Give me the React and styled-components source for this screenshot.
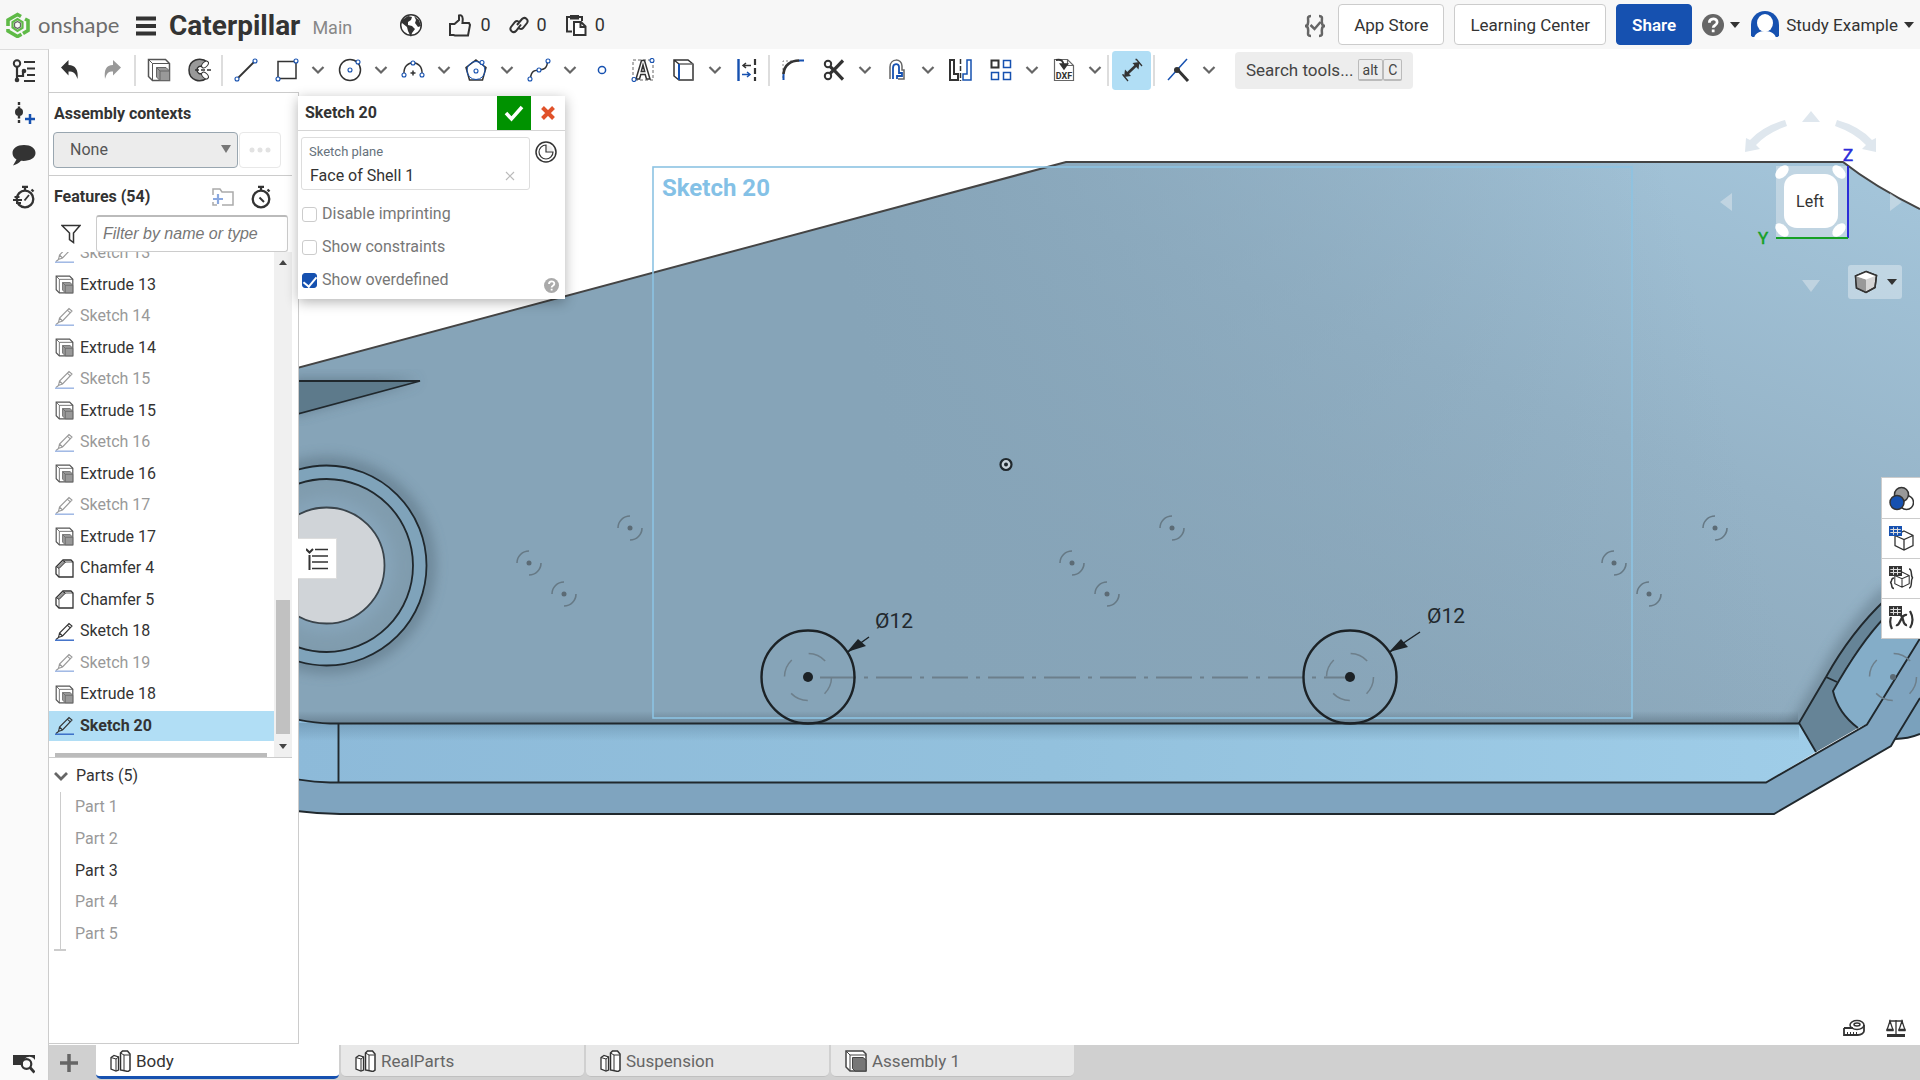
import React from 'react'
import styled, { createGlobalStyle } from 'styled-components'

const GlobalStyle = createGlobalStyle`
    * {
        box-sizing: border-box;
    }
    body {
        margin: 0;
        background-color: white;
        color: #333;
        font-family: Roboto, "Liberation Sans", sans-serif;
        font-size: 16px;
        line-height: 20px;
    }
    button, input, select {
        font: inherit;
        color: inherit;
    }
    button {
        padding: 0;
        border: none;
        background: none;
        cursor: pointer;
    }
    svg {
        display: block;
        flex: none;
    }
`

const Page = styled.div`
    height: 100vh;
    display: flex;
    flex-direction: column;
    overflow: hidden;
`

const Header = styled.header`
    height: 49px;
    flex: none;
    display: flex;
    align-items: center;
    justify-content: space-between;
    background-color: #f7f7f7;
`

const HeaderLeft = styled.div`
    display: flex;
    align-items: center;
    padding-left: 5px;
`

const Brand = styled.a`
    display: flex;
    align-items: center;
    gap: 8px;
    width: 130px;
    font-family: Lato, sans-serif;
    font-size: 22px;
    color: #6d6d6d;
    text-decoration: none;
`

const Title = styled.h1`
    margin: 2px 12px 0 12px;
    font-size: 28px;
    line-height: 32px;
    font-weight: 700;
    color: #333;
`

const Branch = styled.span`
    padding-top: 7px;
    width: 87px;
    font-size: 18px;
    color: #888;
`

const Counters = styled.div`
    display: flex;
    gap: 18px;
    margin-left: 25px;
`

const Counter = styled.button`
    display: flex;
    align-items: center;
    gap: 8px;
    font-size: 18px;
`

const HeaderRight = styled.div`
    display: flex;
    align-items: center;
    gap: 10px;
    padding-right: 6px;
`

const HeaderButton = styled.button`
    height: 41px;
    padding: 0 15px;
    border: 1px solid ${props => props.$primary ? "#1651b0" : "#ccc"};
    border-radius: 4px;
    background-color: ${props => props.$primary ? "#1651b0" : "white"};
    color: ${props => props.$primary ? "white" : "#333"};
    font-size: 17px;
    font-weight: ${props => props.$primary ? "600" : "400"};
`

const MenuButton = styled.button`
    display: flex;
    align-items: center;
    gap: 6px;
    font-size: 17px;
`

const Middle = styled.div`
    flex: 1;
    min-height: 0;
    display: flex;
`

const Rail = styled.nav`
    width: 49px;
    flex: none;
    display: flex;
    flex-direction: column;
    align-items: center;
    border-right: 1px solid #ccc;
    border-top: 1px solid #ddd;
    background-color: #fafafa;
`

const RailButton = styled.button`
    height: 42px;
    width: 48px;
    display: flex;
    align-items: center;
    justify-content: center;
    &:last-child {
        margin-top: auto;
        height: 34px;
    }
`

const Main = styled.div`
    flex: 1;
    min-width: 0;
    display: flex;
    flex-direction: column;
`

const Toolbar = styled.div`
    height: 43px;
    flex: none;
    display: flex;
    align-items: center;
    padding: 0 0 1px 2px;
`

const Tool = styled.button`
    width: 41px;
    height: 39px;
    display: flex;
    align-items: center;
    justify-content: center;
    border-radius: 4px;
    border: solid transparent;
    border-width: 0 1px;
    background-clip: padding-box;
    background-color: ${props => props.$active ? "#b1def5" : "transparent"};
`

const Drop = styled.button`
    width: 22px;
    height: 39px;
    display: flex;
    align-items: center;
    justify-content: center;
`

const Separator = styled.div`
    width: 2px;
    height: 31px;
    margin: 0 2px 0 1px;
    background-color: #ddd;
`

const Search = styled.button`
    height: 37px;
    margin-left: 15px;
    padding: 0 11px;
    display: flex;
    align-items: center;
    border-radius: 4px;
    background-color: #ededed;
    color: #444;
    font-size: 17px;
`

const Key = styled.kbd`
    height: 22px;
    padding: 0 4px;
    margin-left: ${props => props.$first ? "4px" : "0"};
    border: 1px solid #bbb;
    border-bottom-width: 2px;
    border-radius: 2px;
    font-family: inherit;
    font-size: 14px;
    line-height: 20px;
`

const Workspace = styled.div`
    flex: 1;
    min-height: 0;
    display: flex;
`

const Panel = styled.aside`
    width: 250px;
    flex: none;
    display: flex;
    flex-direction: column;
    margin-bottom: 1px;
    border: 1px solid #ccc;
    border-left: none;
`

const PanelTitle = styled.h2`
    display: block;
    margin: 0;
    flex: 1;
    font-size: 16px;
    line-height: 20px;
    font-weight: 700;
`

const Contexts = styled.section`
    padding: 11px 0 7px 4px;
    margin-right: 6px;
    border-bottom: 1px solid #ccc;
    > label {
        padding-left: 1px;
    }
`

const ContextRow = styled.div`
    display: flex;
    gap: 1px;
    padding-top: 8px;
`

const SelectWrap = styled.div`
    position: relative;
    width: 185px;
    svg {
        position: absolute;
        right: 7px;
        top: 13px;
        pointer-events: none;
    }
`

const Select = styled.select`
    display: block;
    width: 100%;
    height: 36px;
    padding: 0 16px;
    appearance: none;
    border: 1px solid #99a6b0;
    border-radius: 4px;
    background-color: #ececec;
    color: #555;
`

const MoreButton = styled.button`
    width: 42px;
    height: 36px;
    display: flex;
    align-items: center;
    justify-content: center;
    border: 1px solid #e8e8e8;
    border-radius: 4px;
`

const FeaturesHead = styled.div`
    height: 39px;
    flex: none;
    display: flex;
    align-items: center;
    gap: 14px;
    padding: 2px 26px 0 5px;
`

const FilterRow = styled.div`
    display: flex;
    align-items: center;
    gap: 15px;
    padding: 0 10px 0 12px;
`

const FilterInput = styled.input`
    width: 100%;
    min-width: 0;
    height: 37px;
    padding: 0 6px;
    border: 1px solid #ccc;
    border-top: 2px solid #bbb;
    border-radius: 3px;
    outline: none;
    font-family: "Liberation Sans", sans-serif;
    font-style: italic;
    &::placeholder {
        color: #777;
        opacity: 1;
    }
`

const FeatureArea = styled.div`
    height: 506px;
    flex: none;
    display: flex;
    margin-right: 6px;
    overflow: hidden;
    border-bottom: 1px solid #ccc;
`

const FeatureColumn = styled.div`
    flex: 1;
    display: flex;
    flex-direction: column;
    justify-content: flex-end;
`

const FeatureList = styled.ul`
    height: 503px;
    flex: none;
    margin: 0;
    padding: 0;
    list-style: none;
    display: flex;
    flex-direction: column;
    justify-content: space-between;
`

const Feature = styled.li`
    height: 30px;
    display: flex;
    align-items: center;
    gap: 6px;
    padding-left: 6px;
    background-color: ${props => props.$active ? "#b1def5" : "transparent"};
    font-weight: ${props => props.$active ? "700" : "400"};
    color: ${props => props.$muted ? "#999" : "#333"};
    svg {
        opacity: ${props => props.$muted ? "0.5" : "1"};
    }
`

const HorizontalThumb = styled.div`
    height: 4px;
    flex: none;
    margin: 12px 7px 0 6px;
    background-color: #bbb;
`

const Scroll = styled.div`
    width: 18px;
    display: flex;
    flex-direction: column;
    align-items: center;
    justify-content: space-between;
    padding: 8px 0;
    background-color: #f0f0f0;
`

const Thumb = styled.div`
    width: 14px;
    height: 134px;
    margin: auto 0 10px;
    background-color: #c1c1c1;
`

const PartsHead = styled.button`
    height: 34px;
    display: flex;
    align-items: center;
    gap: 8px;
    padding: 1px 0 0 5px;
`

const PartList = styled.ul`
    height: 157px;
    margin: 0 0 0 11px;
    padding: 0 0 0 14px;
    list-style: none;
    display: flex;
    flex-direction: column;
    justify-content: space-between;
    border-left: 1px solid #ccc;
`

const PartEnd = styled.div`
    width: 12px;
    height: 2px;
    margin-left: 5px;
    background-color: #ccc;
`

const Part = styled.li`
    line-height: 30px;
    color: ${props => props.$muted ? "#999" : "#333"};
`

const Stage = styled.main`
    position: relative;
    flex: 1;
    min-width: 0;
`

const Drawing = styled.svg`
    position: absolute;
    inset: 0;
    width: 100%;
    height: 100%;
`

const Dialog = styled.section`
    position: absolute;
    left: -1px;
    top: 4px;
    width: 267px;
    background-color: white;
    box-shadow: 0 3px 12px rgba(0, 0, 0, 0.3);
`

const DialogHead = styled.div`
    height: 35px;
    display: flex;
    align-items: center;
    padding-left: 7px;
    border-bottom: 1px solid #d5d5d5;
`

const Accept = styled.button`
    width: 34px;
    height: 34px;
    display: flex;
    align-items: center;
    justify-content: center;
    background-color: #009200;
`

const Cancel = styled(Accept)`
    background-color: white;
`

const DialogBody = styled.div`
    padding: 6px 3px 0;
    height: 168px;
`

const PlaneRow = styled.div`
    display: flex;
    gap: 5px;
    align-items: flex-start;
    > svg {
        margin-top: 4px;
    }
`

const PlaneField = styled.div`
    width: 229px;
    height: 53px;
    padding: 4px 13px 0 7px;
    border: 1px solid #ddd;
    border-radius: 3px;
`

const PlaneLabel = styled.div`
    font-size: 13px;
    color: #66727c;
`

const PlaneValue = styled.div`
    display: flex;
    align-items: center;
    justify-content: space-between;
    padding: 4px 0 0 1px;
`

const Options = styled.div`
    display: flex;
    flex-direction: column;
    gap: 13px;
    padding-top: 14px;
`

const Option = styled.label`
    display: flex;
    align-items: center;
    gap: 5px;
    padding-left: 1px;
    color: #777;
`

const Check = styled.input`
    appearance: none;
    width: 15px;
    height: 15px;
    margin: 0;
    border: 1px solid #ccc;
    border-radius: 3px;
    background-color: white;
    &:checked {
        border-color: #1651b0;
        background-color: #1651b0;
    }
    &:checked::after {
        content: "";
        display: block;
        width: 6px;
        height: 11px;
        margin: 0 auto;
        border: solid white;
        border-width: 0 2px 2px 0;
        transform: rotate(40deg);
    }
`

const DialogHelp = styled.button`
    position: absolute;
    right: 6px;
    bottom: 6px;
`

const ListToggle = styled.button`
    position: absolute;
    left: -1px;
    top: 446px;
    width: 39px;
    height: 41px;
    display: flex;
    align-items: center;
    justify-content: center;
    border: 1px solid #ddd;
    border-left: none;
    background-color: white;
`

const ViewButton = styled.button`
    position: absolute;
    right: 18px;
    top: 173px;
    width: 54px;
    height: 34px;
    display: flex;
    align-items: center;
    justify-content: center;
    gap: 9px;
    border-radius: 3px;
    background-color: rgba(255, 255, 255, 0.35);
`

const SideTabs = styled.div`
    position: absolute;
    right: 0;
    top: 385px;
    width: 39px;
    border: 1px solid #ccc;
    border-right: none;
    background-color: white;
`

const SideTab = styled.button`
    width: 100%;
    height: 40px;
    display: flex;
    align-items: center;
    justify-content: center;
    & + & {
        border-top: 1px solid #ccc;
    }
`

const Measures = styled.div`
    position: absolute;
    right: 13px;
    bottom: 8px;
    display: flex;
    gap: 20px;
`

const Tabs = styled.footer`
    height: 35px;
    flex: none;
    display: flex;
    gap: 2px;
    background-color: #d0d0d0;
`

const AddTab = styled.button`
    width: 45px;
    display: flex;
    align-items: center;
    justify-content: center;
    padding-right: 5px;
`

const Tab = styled.button`
    width: 243px;
    height: ${props => props.$active ? "34px" : "32px"};
    display: flex;
    align-items: center;
    gap: 5px;
    padding-left: 14px;
    border-radius: 0 0 5px 5px;
    border-bottom: ${props => props.$active ? "3px solid #1651b0" : "1px solid #c0c0c0"};
    background-color: ${props => props.$active ? "white" : "#e8e8e8"};
    color: ${props => props.$active ? "#333" : "#666"};
    font-size: 17px;
`

const D = "#333"
const B = "#1651b0"

const Icon = ({ w = 24, h = w, box, children }) => (
    <svg width={w} height={h} viewBox={box || `0 0 ${w} ${h}`} fill="none" stroke={D} strokeWidth="1.5" aria-hidden="true">
        {children}
    </svg>
)

const Node = ({ x, y }) => <circle cx={x} cy={y} r="2" fill="white" stroke={B} strokeWidth="1.1"/>

const Chevron = () => (
    <Icon w={14}><path d="M1.5 4 7 9.5l5.5-5.5" stroke="#666" strokeWidth="2.2"/></Icon>
)

const Caret = () => (
    <Icon w={10} h={6}><path d="M0 0h10L5 6z" fill={D} stroke="none"/></Icon>
)

const ExtrudeIcon = ({ size = 24 }) => (
    <Icon w={size} box="0 0 24 24">
        <path d="M1.5 1.5h17l4 4v17h-17l-4-4z" fill="white" stroke="#555"/>
        <path d="M1.5 1.5l4 4h17M5.500 5.500v17" strokeWidth="1" stroke="#555"/>
        <path d="M9.500 9.500h9.500l3.500 3.500v9.500H13l-3.500-3.500z" fill="#999" strokeWidth="1" stroke="#666"/>
        <path d="M9.500 9.500l3.500 3.500h9.500M13 13v9.500" strokeWidth="1" stroke="#666"/>
    </Icon>
)

const SketchIcon = () => (
    <Icon w={19}>
        <path d="M3.500 15.500l1-4.500L14 1.500l3 2.500-9.500 10zM4.500 11l3 3M12.300 3.200l3 2.700M3.500 15.500L1 17.500" strokeWidth="1.1"/>
        <path d="M0 18.200h19" stroke="#3266c4" strokeWidth="1.4"/>
    </Icon>
)

const ChamferIcon = () => (
    <Icon w={19}>
        <path d="M1 8l7-7h8l2 2v15H4l-3-3z" fill="white" strokeWidth="1.3"/>
        <path d="M1.500 7.500l6-6 3 1.500-6.500 6.500z" fill="#999" strokeWidth="1"/>
        <path d="M4 9.500V18M10.500 3H18" strokeWidth="0.8"/>
    </Icon>
)

const featureIcons = { Extrude: <ExtrudeIcon size={19}/>, Sketch: <SketchIcon/>, Chamfer: <ChamferIcon/> }

const StopwatchIcon = ({ fast }) => (
    <Icon>
        <circle cx="13" cy="14" r="8.300" strokeWidth="2.300"/>
        <path d="M10 1.800h6M13 2v4M19.500 4.500l2 2" strokeWidth="2.300"/>
        {fast
            ? <path d="M12.500 15.500l4.500-5.500M1 15h9M2.500 12h5M4 18h5" strokeWidth="1.800"/>
            : <path d="M11.500 12.500l4.500 4.500" strokeWidth="2"/>}
    </Icon>
)

const HelpIcon = ({ size, color }) => (
    <Icon w={size} box="0 0 24 24">
        <circle cx="12" cy="12" r="12" fill={color} stroke="none"/>
        <path d="M8 9.500c0-5.500 8.500-5.500 8.500-.5 0 3.500-4.300 3-4.300 6M12.200 17v3" stroke="white" strokeWidth="3"/>
    </Icon>
)

const LogoIcon = () => (
    <Icon w={25} h={26}>
        <path d="M3 14V8l9.500-5.500L16 4.500M20 7l3 1.500v10L18 21.500M3 17v2l9.500 5.500 4-2.300" stroke="#5fba47" strokeWidth="3.600"/>
        <path d="M7.500 15.500V10l5-3 5 3v6l-5 3z" stroke="#5fba47" strokeWidth="2.200"/>
        <path d="M12.500 9.500l3 1.700v3.600l-3 1.700-3-1.700v-3.600z" stroke="#666" strokeWidth="1.200"/>
    </Icon>
)

const PartStudioIcon = () => (
    <Icon w={21} h={22}>
        <path d="M1 7.500l3-2 4.500 1.500v13L6 21l-5-2z" fill="white" strokeWidth="1.300"/>
        <path d="M1 7.500l5 1.500 2.500-2M6 9v12" strokeWidth="1"/>
        <path d="M10.500 3l2-2h5l2.500 3v16l-2 1.500-7.500-1.500z" fill="white" strokeWidth="1.500"/>
        <path d="M10.500 3l3.500 2h5.500M14 5v16" strokeWidth="1"/>
    </Icon>
)

const AssemblyIcon = () => (
    <Icon w={22}>
        <path d="M1 1h17l3 3v17H5l-4-4z" fill="white" stroke="#444"/>
        <path d="M1 1l4 4h16M5 5v16" strokeWidth="1" stroke="#444"/>
        <path d="M7.500 7.500H18l3 2.500v11H10l-2.500-2.500z" fill="#777" strokeWidth="1" stroke="#444"/>
    </Icon>
)

const GridGlyph = ({ color }) => (
    <g>
        <path d="M0 0h13v10H0z" fill={color} stroke="none"/>
        <path d="M1.300 3.500h10.500M1.300 6.500h10.500M4.500 1.300v7.500M8.500 1.300v7.500" stroke="#ddd" strokeWidth="1"/>
    </g>
)

const CubeGlyph = () => (
    <path d="M15 5l9 4.500v10L15 24l-9-4.500v-10zM6 9.500l9 4 9-4M15 13.500V24" fill="white" strokeWidth="1.300"/>
)

const tools = [
    { name: "Undo", icon: <Icon><path d="M1 9.500L8.500 2v5c7 0 10 5 9 14-2-6-4-7.500-9-7.500v4z" fill={D} stroke="none"/></Icon> },
    { name: "Redo", icon: <Icon><path d="M20 9.500L12 2v5C5 7 3 12 4 21c2-6 3-7.500 8-7.500v4z" fill="#999" stroke="none"/></Icon>, end: true },
    { name: "Extrude", icon: <ExtrudeIcon/> },
    { name: "Revolve", icon: (
        <Icon>
            <path d="M20 4.500C12-2 1 2 1 12s11 14 19 7.500l-5-4.500c-3 2-6 0-6-3s3-5 6-3z" fill="#999"/>
            <ellipse cx="17" cy="6.500" rx="4" ry="2.500" transform="rotate(-45 17 6.500)" fill="white" strokeWidth="1"/>
            <ellipse cx="17" cy="17.500" rx="4" ry="2.500" transform="rotate(45 17 17.500)" fill="white" strokeWidth="1"/>
            <path d="M7 12h17" strokeDasharray="4 2"/>
        </Icon>
    ), end: true },
    { name: "Line", icon: <Icon><path d="M3.500 20.500l17-17" strokeWidth="1.800"/><Node x="3" y="21"/><Node x="21" y="3"/></Icon> },
    { name: "Rectangle", drop: true, icon: <Icon><path d="M3 3.500h18v17H3z"/><Node x="3" y="21"/><Node x="21" y="3"/></Icon> },
    { name: "Circle", drop: true, icon: <Icon><circle cx="12" cy="12" r="10.500"/><Node x="12" y="12"/><Node x="20" y="4"/></Icon> },
    { name: "Arc", drop: true, icon: <Icon><path d="M3 16C2 1 22 1 21 16M9.500 15h5M12 12.500v5"/><Node x="3" y="17"/><Node x="12" y="5"/><Node x="21" y="17"/></Icon> },
    { name: "Polygon", drop: true, icon: <Icon><path d="M12 2l10 7.500L18.500 22h-13L2 9.500z"/><circle cx="12" cy="12.500" r="9" stroke={B} strokeWidth="1"/><Node x="12" y="13"/><Node x="18" y="4.500"/></Icon> },
    { name: "Spline", drop: true, icon: <Icon><path d="M3.500 20c1-9 6-7.500 8.500-8s8 .500 8.500-8.500"/><Node x="3" y="21"/><Node x="12" y="12"/><Node x="21" y="3"/></Icon> },
    { name: "Point", icon: <Icon><circle cx="12" cy="12" r="3.600" stroke={B}/></Icon> },
    { name: "Text", icon: <Icon><path d="M2 2h20v20H2z" strokeDasharray="3 2" strokeWidth="1" stroke="#666"/><path d="M5 21L10.500 2.500h3L19 21h-3.500l-1.300-4.500H9.800L8.500 21zM12 7l-1.700 6.500h3.400z" fill="white"/><Node x="3" y="21.500"/><Node x="21" y="2.500"/></Icon> },
    { name: "Use", drop: true, icon: <Icon><path d="M2 2h14l5 4v16H7l-5-4zM2 2l5 4"/><path d="M7 6h14M21 6v16" stroke="#666"/><path d="M7 6v16" stroke={B} strokeWidth="2"/></Icon> },
    { name: "Align", end: true, icon: <Icon><path d="M3.500 1v22" stroke={B} strokeWidth="2.400"/><path d="M20 1v22" strokeWidth="2.200" strokeDasharray="6 3"/><path d="M16 7.500H9M11 5L8 7.500l3 2.500"/><path d="M7 16.500h7M12 14l3 2.500-3 2.500" stroke={B}/></Icon> },
    { name: "Fillet", icon: <Icon><path d="M2 20V3h17" strokeDasharray="2 2" strokeWidth="1" stroke="#888"/><path d="M2.500 22v-6M18 2.500h5" stroke={B} strokeWidth="2"/><path d="M2.500 16C3 7 10 2.500 18 2.500" strokeWidth="2.600"/></Icon> },
    { name: "Trim", drop: true, icon: <Icon><circle cx="6" cy="6" r="3.200" strokeWidth="2"/><circle cx="6" cy="18" r="3.200" strokeWidth="2"/><path d="M8 8.500c6 5 8 8 13 13M8 15.500c6-5 8-8 13-13" strokeWidth="3.200"/></Icon> },
    { name: "Offset", drop: true, icon: <Icon><path d="M5 21V9c0-9 12-9 12-1v4h2v9h-6" stroke="#666"/><path d="M8 21V10c0-5 6-5 6-1v6h3v3h-5v3" stroke={B} strokeWidth="1.800"/></Icon> },
    { name: "Mirror", icon: <Icon><path d="M2 2h4v14h4v6H2z" strokeWidth="2"/><path d="M12.500 1v22" strokeDasharray="5 2"/><path d="M23 2h-4v14h-4v6h8z" stroke={B}/></Icon> },
    { name: "Pattern", drop: true, icon: <Icon><path d="M2.500 2.500h7v7h-7z" strokeWidth="2"/><path d="M14.500 2.500h7v7h-7zM2.500 14.500h7v7h-7zM14.500 14.500h7v7h-7z" stroke={B}/></Icon> },
    { name: "Insert DXF", drop: true, end: true, icon: (
        <Icon>
            <path d="M2.500 1.500h13l6 6v15h-19zM15.500 1.500v6h6" strokeWidth="1.200" stroke="#666"/>
            <path d="M4 2c6-1 7 1 8 6" strokeWidth="1.800"/>
            <path d="M8.500 6l3.500 5 3.500-5z" fill={D}/>
            <text x="12" y="21" textAnchor="middle" fontSize="9" fontWeight="700" fill={D} stroke="none">DXF</text>
        </Icon>
    ) },
    { name: "Dimension", active: true, end: true, icon: <Icon><path d="M7 16L16.500 7" strokeWidth="2.600"/><path d="M4 19l1-7.500 6 6.500zM19.500 4l-7 1 6 6.500z" fill={D} stroke="none"/><path d="M3 16v1l5 6M15.500 1.500h1L22 8" strokeWidth="1.300"/></Icon> },
    { name: "Constraint", drop: true, icon: <Icon><path d="M2 22L21 1" stroke={B}/><path d="M11 11l11 12" strokeWidth="3"/><circle cx="11" cy="12" r="3" fill={D} stroke="none"/></Icon> }
]

const railIcons = [
    { name: "Feature list", icon: <Icon><circle cx="5" cy="4.500" r="3.200" strokeWidth="2"/><path d="M5 8v13M5 17h6v-5M12 3h11M15 9.500h8M15 16h8M12 22h11" strokeWidth="2.200"/><circle cx="5" cy="21" r="2.300" fill={D} stroke="none"/><circle cx="12" cy="12" r="2.300" fill={D} stroke="none"/></Icon> },
    { name: "Versions", icon: <Icon><path d="M7 1v22" strokeWidth="2.400" strokeDasharray="3 1.500"/><circle cx="7" cy="11" r="4" fill={D} stroke="none"/><path d="M18 13v10M13 18h10" stroke={B} strokeWidth="2.500"/></Icon> },
    { name: "Comments", icon: <Icon><path d="M12 2C5 2 .500 5.500.500 10c0 3 1.500 5 4 6.500L1 22.500c4-1 6-2.500 8-4.700 8 .700 14.500-2.300 14.500-7.800C23.500 5.500 19 2 12 2z" fill={D} stroke="none"/></Icon> },
    { name: "History", icon: <StopwatchIcon fast/> },
    { name: "Search document", icon: <Icon w={22}><path d="M0 3h22v5c-4-6-13-3-12 5H0z" fill={D} stroke="none"/><circle cx="13.500" cy="12" r="4.800" strokeWidth="2.200"/><path d="M17 15.500l4.500 5" strokeWidth="2.800"/></Icon> }
]

const features = [
    ["Sketch", 13, "muted"], ["Extrude", 13], ["Sketch", 14, "muted"], ["Extrude", 14],
    ["Sketch", 15, "muted"], ["Extrude", 15], ["Sketch", 16, "muted"], ["Extrude", 16],
    ["Sketch", 17, "muted"], ["Extrude", 17], ["Chamfer", 4], ["Chamfer", 5],
    ["Sketch", 18], ["Sketch", 19, "muted"], ["Extrude", 18], ["Sketch", 20, "active"]
]

const marks = [[630, 528], [529, 563], [564, 594], [1172, 528], [1072, 563], [1107, 594], [1715, 528], [1614, 563], [1649, 594]]

const HiddenHole = ({ x, y }) => (
    <circle cx={x} cy={y} r="23.500" stroke="#6d7f8b" strokeWidth="1.500" strokeDasharray="18.450 18.450"/>
)

const Model = () => (
    <Drawing viewBox="299 92 1621 953" preserveAspectRatio="xMinYMin slice" fill="none" role="img" aria-label="Caterpillar body, left view">
        <defs>
            <linearGradient id="body" gradientUnits="userSpaceOnUse" x1="1800" y1="160" x2="1560" y2="760">
                <stop offset="0" stopColor="#a3c4d9"/>
                <stop offset="0.500" stopColor="#95b3c7"/>
                <stop offset="1" stopColor="#8ba7ba"/>
            </linearGradient>
            <linearGradient id="bodyLeft" gradientUnits="userSpaceOnUse" x1="900" y1="500" x2="1700" y2="300">
                <stop offset="0" stopColor="#86a4b8"/>
                <stop offset="1" stopColor="#86a4b8" stopOpacity="0"/>
            </linearGradient>
            <linearGradient id="groove" x1="0" x2="1" y1="0" y2="0">
                <stop offset="0" stopColor="#8dbad9"/>
                <stop offset="0.500" stopColor="#93c1dd"/>
                <stop offset="1" stopColor="#9fcde8"/>
            </linearGradient>
            <linearGradient id="grooveShade" x1="0" x2="0" y1="0" y2="1">
                <stop offset="0" stopColor="#4d7088" stopOpacity="0.350"/>
                <stop offset="1" stopColor="#4d7088" stopOpacity="0"/>
            </linearGradient>
            <linearGradient id="edgeShade" x1="0" x2="0" y1="1" y2="0">
                <stop offset="0" stopColor="#4c606e" stopOpacity="0.450"/>
                <stop offset="1" stopColor="#4c606e" stopOpacity="0"/>
            </linearGradient>
            <filter id="soft" x="-30%" y="-30%" width="160%" height="160%">
                <feGaussianBlur stdDeviation="7"/>
            </filter>
            <clipPath id="plate">
                <path d="M290 370L1066 162h777Q1875 187 1920 209V723H330Q312 723 290 719z"/>
            </clipPath>
        </defs>

        <path d="M290 370L1066 162h777Q1875 187 1920 209V723H330Q312 723 290 719z" fill="url(#body)"/>
        <path d="M290 370L1066 162h777Q1875 187 1920 209V723H330Q312 723 290 719z" fill="url(#bodyLeft)"/>
        <g clipPath="url(#plate)">
            <path d="M290 380h130L290 415z" fill="#3d515f" opacity="0.500" filter="url(#soft)"/>
            <circle cx="327" cy="565" r="101" stroke="#4c606e" strokeWidth="12" opacity="0.550" filter="url(#soft)"/>
            <path d="M1793 733L1826 677Q1850 630 1890 590" stroke="#4c606e" strokeWidth="10" opacity="0.600" filter="url(#soft)"/>
            <path d="M290 711h1508v12H290z" fill="url(#edgeShade)"/>
        </g>
        <path d="M290 370L1066 162h777Q1875 187 1920 209" stroke="#444" strokeWidth="2"/>

        <path d="M290 381h130L290 416z" fill="#5d7a8b" stroke="#20282d" strokeWidth="1.800"/>

        <circle cx="326.500" cy="565.500" r="100" fill="#7fa3ba" stroke="#20282d" strokeWidth="1.800"/>
        <circle cx="326.500" cy="565.500" r="86.500" fill="#809cae" stroke="#20282d" strokeWidth="1.800"/>
        <circle cx="326.500" cy="565.500" r="68" fill="#86a4b9" filter="url(#soft)"/>
        <circle cx="326.500" cy="565.500" r="58" fill="#d0d4d8" stroke="#3a444b" strokeWidth="1.800"/>

        <path d="M290 718Q312 723 330 723H1799l17 29-50 30H330Q312 782 290 778z" fill="url(#groove)"/>
        <path d="M299 723h1500v18H299z" fill="url(#grooveShade)"/>
        <path d="M1867 724l53-88v80q0 18-25 23l-30 0z" fill="#82a9c3"/>
        <path d="M1881 603v20Q1853 650 1833 691q5 22 25 37l-42 24-17-29 27-46q25-45 55-74z" fill="#668497"/>
        <path d="M1925 580Q1862 630 1833 691q5 22 25 37l9-4 58-94z" fill="#84adc8"/>
        <path d="M290 778q20 4 40 4h1436l101-58 53-86v60l-25 41-4 7-117 68H340q-25 0-50-4z" fill="#7fa4bf"/>
        <path d="M1895 739q13 0 25-5v-37z" fill="#7aa1bc"/>

        <g stroke="#20282d" strokeWidth="1.900">
            <path d="M290 718Q312 723 330 723.500H1799M338.500 723v59"/>
            <path d="M290 778q20 4 40 4.500h1436l101-58 53-86"/>
            <path d="M290 810q25 4 50 4h1434l117-68 4-7 25-41"/>
            <path d="M1816 752l-17-29 27-46q25-45 60-78M1826 677l11 5"/>
            <path d="M1885 617Q1860 643 1833 691q5 22 25 37M1895 739q13 0 25-5"/>
        </g>

        <rect x="653" y="167" width="979" height="551" stroke="#8cc3e3" strokeWidth="1.600"/>
        <text x="662" y="196" fontSize="24" fontWeight="700" fill="#84c1e6">Sketch 20</text>

        {marks.map(([x, y]) => (
            <g key={x} stroke="#667985" strokeWidth="1.600">
                <path d={`M${x - 12} ${y}A12 12 0 0 1 ${x} ${y - 12}M${x + 12} ${y}A12 12 0 0 1 ${x} ${y + 12}`}/>
                <circle cx={x} cy={y} r="2.500" fill="#5c6b75" stroke="none"/>
            </g>
        ))}

        <path d="M820 677.500h530" stroke="#6c7f8b" strokeWidth="1.800" strokeDasharray="36 8 4 8"/>
        {[808, 1350].map(x => (
            <g key={x}>
                <circle cx={x} cy="677" r="46.500" stroke="#1c2226" strokeWidth="2.400"/>
                <HiddenHole x={x} y={677}/>
                <circle cx={x} cy="677" r="5" fill="#1c2226"/>
            </g>
        ))}
        <HiddenHole x={1893} y={677}/>
        <circle cx="1893" cy="677" r="3" fill="#5c6b75"/>

        <path d="M848 652l21-15M1390 652l30-20" stroke="#1c2226" strokeWidth="1.500"/>
        <path d="M847 652l11-13 8 7zM1389 652l12-13 7 8z" fill="#1c2226"/>
        <g fontSize="21" fill="#22292e">
            <text x="875" y="628">Ø12</text>
            <text x="1427" y="623">Ø12</text>
        </g>

        <circle cx="1006" cy="464.500" r="5.500" fill="#c9d3da" stroke="#20282d" strokeWidth="2.200"/>
        <circle cx="1006" cy="464.500" r="2" fill="#20282d"/>
    </Drawing>
)

const ViewCube = () => (
    <Drawing viewBox="299 92 1621 953" preserveAspectRatio="xMaxYMin slice" fill="none" aria-label="View cube">
        <g fill="#dfe7ee">
            <path d="M1811 111l9 11h-18z"/>
            <path d="M1785 120l2 6q-20 7-31 19l4 4-15 3 1-14 4 2q13-14 35-20z"/>
            <path d="M1837 120l-2 6q20 7 31 19l-4 4 14 3 0-14-4 2q-13-14-35-20z"/>
        </g>
        <g fill="#dfe7ee" fillOpacity="0.500">
            <path d="M1720 202l12-9v18zM1902 202l-12-9v18zM1811 292l-9-12h18z"/>
            <path d="M1776 166h71v72h-71z"/>
        </g>
        <g fill="white">
            <rect x="1784" y="174" width="54" height="54" rx="13"/>
            <ellipse cx="1782" cy="172" rx="8" ry="5" transform="rotate(-45 1782 172)"/>
            <ellipse cx="1839" cy="172" rx="8" ry="5" transform="rotate(45 1839 172)"/>
            <ellipse cx="1782" cy="230" rx="8" ry="5" transform="rotate(45 1782 230)"/>
            <ellipse cx="1839" cy="230" rx="8" ry="5" transform="rotate(-45 1839 230)"/>
        </g>
        <path d="M1848 166v72" stroke="#2c2cd8" strokeWidth="2"/>
        <path d="M1776 238h72" stroke="#16a024" strokeWidth="2"/>
        <g textAnchor="middle">
            <text x="1810" y="207" fontSize="16" fill="#333">Left</text>
            <text x="1848" y="161" fontSize="17" fill="#2c2cd8" stroke="#2c2cd8" strokeWidth="0.500">Z</text>
            <text x="1763" y="244" fontSize="17" fill="#16a024" stroke="#16a024" strokeWidth="0.500">Y</text>
        </g>
    </Drawing>
)

const FeaturePanel = () => (
    <Panel>
        <Contexts>
            <PanelTitle as="label" htmlFor="context">Assembly contexts</PanelTitle>
            <ContextRow>
                <SelectWrap>
                    <Select id="context"><option>None</option></Select>
                    <Icon w={10} h={8}><path d="M0 0h10L5 8z" fill="#777" stroke="none"/></Icon>
                </SelectWrap>
                <MoreButton aria-label="Context options">
                    <Icon w={22} h={6}><path d="M3 3h.010M11 3h.010M19 3h.010" stroke="#e2e2e2" strokeWidth="5" strokeLinecap="round"/></Icon>
                </MoreButton>
            </ContextRow>
        </Contexts>
        <FeaturesHead>
            <PanelTitle>Features (54)</PanelTitle>
            <button aria-label="Add folder">
                <Icon w={22} h={18}><path d="M1 7V1h7l2 3h11v13H10M1 14v3h4" stroke="#aaa"/><path d="M6 6v10M1 11h10" stroke="#8aa8df" strokeWidth="2.200"/></Icon>
            </button>
            <button aria-label="Regeneration times"><StopwatchIcon/></button>
        </FeaturesHead>
        <FilterRow>
            <Icon w={20}><path d="M1 1.500h18L12.500 9v9.500l-4-3V9z"/></Icon>
            <FilterInput aria-label="Filter features" placeholder="Filter by name or type"/>
        </FilterRow>
        <FeatureArea>
            <FeatureColumn>
                <FeatureList>
                    {features.map(([kind, number, state]) => (
                        <Feature key={kind + number} $active={state === "active"} $muted={state === "muted"}>
                            {featureIcons[kind]}
                            {kind} {number}
                        </Feature>
                    ))}
                </FeatureList>
                <HorizontalThumb/>
            </FeatureColumn>
            <Scroll>
                <Icon w={8} h={5}><path d="M0 5h8L4 0z" fill="#444" stroke="none"/></Icon>
                <Thumb/>
                <Icon w={8} h={5}><path d="M0 0h8L4 5z" fill="#444" stroke="none"/></Icon>
            </Scroll>
        </FeatureArea>
        <PartsHead>
            <Icon w={14}><path d="M1 4l6 6 6-6" stroke="#666" strokeWidth="2.800"/></Icon>
            Parts (5)
        </PartsHead>
        <PartList>
            {[1, 2, 3, 4, 5].map(n => <Part key={n} $muted={n !== 3}>Part {n}</Part>)}
        </PartList>
        <PartEnd/>
    </Panel>
)

const SketchDialog = () => (
    <Dialog>
        <DialogHead>
            <PanelTitle>Sketch 20</PanelTitle>
            <Accept aria-label="Accept"><Icon w={20}><path d="M2 10l5.500 6L18 4" stroke="white" strokeWidth="3.500"/></Icon></Accept>
            <Cancel aria-label="Cancel"><Icon w={16}><path d="M2.500 2.500l11 11M13.500 2.500l-11 11" stroke="#e0522a" strokeWidth="4"/></Icon></Cancel>
        </DialogHead>
        <DialogBody>
            <PlaneRow>
                <PlaneField>
                    <PlaneLabel>Sketch plane</PlaneLabel>
                    <PlaneValue>
                        Face of Shell 1
                        <Icon w={12}><path d="M2 2l8 8M10 2l-8 8" stroke="#bbb" strokeWidth="1.200"/></Icon>
                    </PlaneValue>
                </PlaneField>
                <Icon w={22}>
                    <circle cx="11" cy="11" r="10"/>
                    <path d="M11 4a7 7 0 1 0 7 7h-7z" fill="white" strokeWidth="1.200"/>
                    <path d="M12 4a7 7 0 0 1 6 6h-6z" fill="#eee" stroke="none"/>
                </Icon>
            </PlaneRow>
            <Options>
                <Option><Check type="checkbox"/>Disable imprinting</Option>
                <Option><Check type="checkbox"/>Show constraints</Option>
                <Option><Check type="checkbox" defaultChecked/>Show overdefined</Option>
            </Options>
        </DialogBody>
        <DialogHelp aria-label="Sketch help"><HelpIcon size={15} color="#aaa"/></DialogHelp>
    </Dialog>
)

const App = () => {
  return (
   <Page>
    <GlobalStyle/>
    <Header>
        <HeaderLeft>
            <Brand href="#"><LogoIcon/>onshape</Brand>
            <button aria-label="Document menu">
                <Icon w={22}><path d="M1 4.500h20M1 12h20M1 19.500h20" strokeWidth="4"/></Icon>
            </button>
            <Title>Caterpillar</Title>
            <Branch>Main</Branch>
            <Icon>
                <circle cx="12" cy="12" r="10.300" fill="white"/>
                <path d="M3 7l6-4 4 1-1 3-3 2 0 3 4 1 3 3-3 4-1 4-3-6-1-4-5-4zM15 3l5 4 2 6-3 1-3-4 1-3z" fill={D} stroke="none"/>
            </Icon>
            <Counters>
                <Counter aria-label="Likes">
                    <Icon w={24}><path d="M2 11h4.500L11 7V2.500c3-1 4.500 1.500 3.500 7.500h6.500l1 2-2 10.500H7L5.500 22H2z" strokeWidth="2"/></Icon>0
                </Counter>
                <Counter aria-label="Links">
                    <Icon w={20}><path d="M8 10l5-6c3-3 7 1 5 4l-4 5c-1.500 1.500-4 1-4.500-.500M12 9.500l-5 6.500c-3 3-7-1-5-4l4-5C7.500 5.500 10 6 10.500 7.500" strokeWidth="2"/></Icon>0
                </Counter>
                <Counter aria-label="Copies">
                    <Icon w={22}><path d="M7 17.500H2V3h15v4M6 4.500V2h7v2.500z" strokeWidth="2"/><path d="M9 8h7l4.500 4.500V21H9zM15.500 8v5h5" fill="white" strokeWidth="2"/></Icon>0
                </Counter>
            </Counters>
        </HeaderLeft>
        <HeaderRight>
            <Icon w={26}><path d="M9 4C4 4 7 8 6 11c0 2-1 3-3 3 2 0 3 1 3 3 1 3-2 7 3 7M17 4c5 0 2 4 3 7 0 2 1 3 3 3-2 0-3 1-3 3-1 3 2 7-3 7M8.500 13l4 4 6-7" stroke="#666" strokeWidth="2.500"/></Icon>
            <HeaderButton>App Store</HeaderButton>
            <HeaderButton>Learning Center</HeaderButton>
            <HeaderButton $primary>Share</HeaderButton>
            <MenuButton aria-label="Help"><HelpIcon size={22} color="#666"/><Caret/></MenuButton>
            <MenuButton>
                <Icon w={30}><path d="M1 27V15a14 14 0 0 1 28 0v12z" fill={B} stroke="none"/><ellipse cx="15" cy="13" rx="8" ry="9" fill="white" stroke="none"/><path d="M4 30c-1-12 23-12 22 0z" fill="white" stroke="none"/><path d="M0 25l6 5h18l6-5v5H0z" fill="#f7f7f7" stroke="none"/></Icon>
                Study Example
                <Caret/>
            </MenuButton>
        </HeaderRight>
    </Header>
    <Middle>
        <Rail>
            {railIcons.map(item => <RailButton key={item.name} aria-label={item.name}>{item.icon}</RailButton>)}
        </Rail>
        <Main>
            <Toolbar>
                {tools.map(tool => (
                    <React.Fragment key={tool.name}>
                        <Tool aria-label={tool.name} $active={tool.active}>{tool.icon}</Tool>
                        {tool.drop && <Drop aria-label={tool.name + " options"}><Chevron/></Drop>}
                        {tool.end && <Separator/>}
                    </React.Fragment>
                ))}
                <Search>Search tools...<Key $first>alt</Key><Key>C</Key></Search>
            </Toolbar>
            <Workspace>
                <FeaturePanel/>
                <Stage>
                    <Model/>
                    <ViewCube/>
                    <SketchDialog/>
                    <ListToggle aria-label="Toggle list"><Icon w={22}><path d="M0 1l3.500 3.500L7 1M3.500 7v15" strokeWidth="2"/><path d="M9 1.500h13M6 8h16M6 14h16M6 20.500h16"/></Icon></ListToggle>
                    <ViewButton aria-label="View options">
                        <Icon w={24}>
                            <path d="M12 1.500l10.500 4-1.500 12L12 22.500 2.500 18l-1-12z" fill="#d5d5d5"/>
                            <path d="M1.500 6L12 9.500V22L2.500 18z" fill="#999" stroke="none"/>
                            <path d="M1.500 6L12 1.500l10.500 4L12 9.500z" fill="white" stroke="none"/>
                            <path d="M12 1.500l10.500 4-1.500 12L12 22.500 2.500 18l-1-12z"/>
                        </Icon>
                        <Caret/>
                    </ViewButton>
                    <SideTabs>
                        <SideTab aria-label="Appearances"><Icon w={25}><circle cx="17.500" cy="16.500" r="7" fill="white"/><circle cx="12.500" cy="8.500" r="7" fill="#999"/><circle cx="8" cy="16.500" r="7" fill={B}/></Icon></SideTab>
                        <SideTab aria-label="Configurations"><Icon w={25}><CubeGlyph/><GridGlyph color={B}/></Icon></SideTab>
                        <SideTab aria-label="Configured properties"><Icon w={25}><g transform="translate(1 2) scale(.8)"><CubeGlyph/></g><path d="M5 12c-4 0-1 4-4 4.500 3 0 0 6 4 6M20 3c4 0 1 8 4 9-3 0 0 10-4 10" strokeWidth="1.500"/><GridGlyph color={D}/></Icon></SideTab>
                        <SideTab aria-label="Variables"><Icon w={25}><GridGlyph color={D}/><path d="M2 11q-2 6 1 12M21 5q5 9 0 17" strokeWidth="2.200"/><path d="M7 19c4 2 5-12 11-10M11 9c4 0 2 11 7 10" strokeWidth="2.300"/></Icon></SideTab>
                    </SideTabs>
                    <Measures>
                        <button aria-label="Measure"><Icon w={22} h={18}><path d="M1 9h9M1 9v7h14c3 0 6-2 6-4V6" strokeWidth="1.800"/><ellipse cx="14" cy="6" rx="7" ry="4.500"/><ellipse cx="14" cy="5.500" rx="3" ry="1.500"/><path d="M4.500 13v3M7.500 13v3M10.500 13v3M13.500 13v3" strokeWidth="1"/></Icon></button>
                        <button aria-label="Mass properties"><Icon w={22} h={18}><path d="M4 2h14M11 1v14M5 2L2 11h6zM17 2l-3 9h6z" strokeWidth="1.300"/><path d="M1.500 11h7M13.500 11h7" strokeWidth="2.500"/><path d="M2 16.500h18" strokeWidth="3"/></Icon></button>
                    </Measures>
                </Stage>
            </Workspace>
            <Tabs>
                <AddTab aria-label="Add tab"><Icon w={18}><path d="M9 0v18M0 9h18" stroke="#666" strokeWidth="3.500"/></Icon></AddTab>
                <Tab $active><PartStudioIcon/>Body</Tab>
                <Tab><PartStudioIcon/>RealParts</Tab>
                <Tab><PartStudioIcon/>Suspension</Tab>
                <Tab><AssemblyIcon/>Assembly 1</Tab>
            </Tabs>
        </Main>
    </Middle>
   </Page>
  )
}

export default App
